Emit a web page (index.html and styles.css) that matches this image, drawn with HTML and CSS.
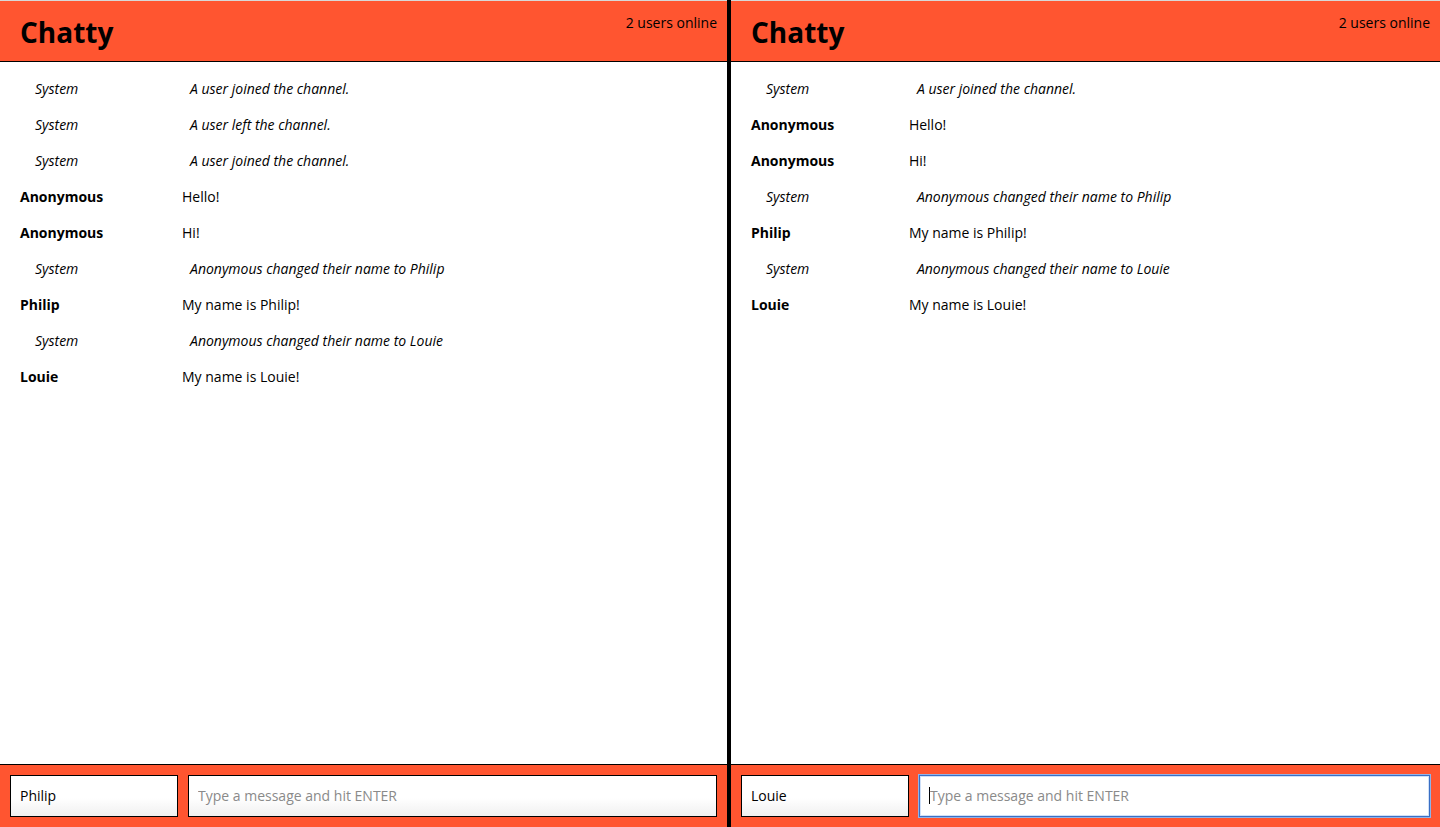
FILE: index.html
```html
<!DOCTYPE html>
<html lang="en">
<head>
<meta charset="utf-8">
<title>Chatty</title>
<link rel="stylesheet" href="styles.css">
</head>
<body>
<div class="app">
  <section class="pane pane-left">
    <header class="topbar">
      <h1 class="brand">Chatty</h1>
      <span class="online">2 users online</span>
    </header>
    <main class="messages">
      <div class="msg system"><span class="user">System</span><span class="text">A user joined the channel.</span></div>
      <div class="msg system"><span class="user">System</span><span class="text">A user left the channel.</span></div>
      <div class="msg system"><span class="user">System</span><span class="text">A user joined the channel.</span></div>
      <div class="msg"><span class="user">Anonymous</span><span class="text">Hello!</span></div>
      <div class="msg"><span class="user">Anonymous</span><span class="text">Hi!</span></div>
      <div class="msg system"><span class="user">System</span><span class="text">Anonymous changed their name to Philip</span></div>
      <div class="msg"><span class="user">Philip</span><span class="text">My name is Philip!</span></div>
      <div class="msg system"><span class="user">System</span><span class="text">Anonymous changed their name to Louie</span></div>
      <div class="msg"><span class="user">Louie</span><span class="text">My name is Louie!</span></div>
    </main>
    <footer class="composer">
      <input class="field name-field" type="text" value="Philip">
      <input class="field msg-field" type="text" placeholder="Type a message and hit ENTER">
    </footer>
  </section>
  <div class="divider"></div>
  <section class="pane pane-right">
    <header class="topbar">
      <h1 class="brand">Chatty</h1>
      <span class="online">2 users online</span>
    </header>
    <main class="messages">
      <div class="msg system"><span class="user">System</span><span class="text">A user joined the channel.</span></div>
      <div class="msg"><span class="user">Anonymous</span><span class="text">Hello!</span></div>
      <div class="msg"><span class="user">Anonymous</span><span class="text">Hi!</span></div>
      <div class="msg system"><span class="user">System</span><span class="text">Anonymous changed their name to Philip</span></div>
      <div class="msg"><span class="user">Philip</span><span class="text">My name is Philip!</span></div>
      <div class="msg system"><span class="user">System</span><span class="text">Anonymous changed their name to Louie</span></div>
      <div class="msg"><span class="user">Louie</span><span class="text">My name is Louie!</span></div>
    </main>
    <footer class="composer">
      <input class="field name-field" type="text" value="Louie">
      <div class="field msg-field focused"><span class="caret"></span><span class="placeholder">Type a message and hit ENTER</span></div>
    </footer>
  </section>
</div>
</body>
</html>
```

FILE: styles.css
```css
* { box-sizing: border-box; }

html, body {
  margin: 0;
  padding: 0;
  height: 100%;
}

body {
  font-family: "Open Sans", "Noto Sans", sans-serif;
  font-size: 14px;
  color: #000;
  background: #fff;
}

.app {
  display: flex;
  height: 827px;
  width: 1440px;
}

.pane {
  display: flex;
  flex-direction: column;
  height: 100%;
  min-width: 0;
}

.pane-left { width: 727px; flex: 0 0 727px; }
.pane-right { flex: 1 1 auto; }

.divider {
  flex: 0 0 4px;
  background: #000;
}

.topbar {
  height: 62px;
  flex: 0 0 62px;
  background: #ff5530;
  border-top: 1px solid #d8d8d8;
  border-bottom: 1px solid #000;
  display: flex;
  justify-content: space-between;
  align-items: flex-start;
  padding: 0 10px 0 20px;
}

.brand {
  margin: 0;
  padding-top: 12px;
  font-size: 28px;
  line-height: 38px;
  font-weight: 700;
}

.online {
  padding-top: 11px;
  font-size: 14px;
  line-height: 22px;
}

.messages {
  flex: 1 1 auto;
  padding-top: 8px;
  overflow: hidden;
}

.msg {
  display: flex;
  height: 36px;
  align-items: center;
  padding-left: 20px;
}

.user {
  flex: 0 0 22.92%;
  font-weight: 700;
}

.msg.system .user {
  font-weight: 400;
  font-style: italic;
  padding-left: 15px;
  flex-basis: calc(22.92% + 8px);
}

.msg.system .text {
  font-style: italic;
}

.composer {
  flex: 0 0 63px;
  background: #ff5530;
  border-top: 1px solid #000;
  display: flex;
  gap: 10px;
  padding: 10px 10px 0 10px;
}

.field {
  height: 42px;
  border: 1px solid #000;
  background: linear-gradient(#ffffff 0%, #ffffff 55%, #f0f0f0 100%);
  font-family: "Open Sans", "Noto Sans", sans-serif;
  font-size: 14px;
  color: #000;
  padding: 0 9px 2px 9px;
  margin: 0;
  outline: none;
  border-radius: 0;
}

.field::placeholder { color: #8a8a8a; }

.name-field { flex: 0 0 168px; width: 168px; }
.msg-field { flex: 1 1 auto; min-width: 0; }

.focused {
  display: flex;
  align-items: center;
  border: 1px solid #3a6fc4;
  box-shadow: 0 0 0 1px #8fb2e8, inset 0 0 0 1px #cfe0f8;
  background: #fff;
}

.caret {
  width: 1px;
  height: 17px;
  background: #000;
}

.placeholder { color: #8a8a8a; }
```
